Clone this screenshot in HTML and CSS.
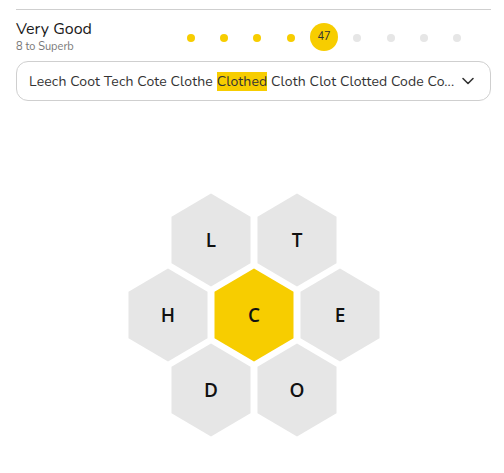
FILE: index.html
```html
<!DOCTYPE html>
<html>
<head>
<meta charset="utf-8">
<link rel="stylesheet" href="styles.css">
</head>
<body>
<div class="page">
  <div class="status">
    <div class="rank">
      <div class="rank-title">Very Good</div>
      <div class="rank-next">8 to Superb</div>
    </div>
    <div class="progress">
      <span class="dot on"></span>
      <span class="dot on"></span>
      <span class="dot on"></span>
      <span class="dot on"></span>
      <span class="score">47</span>
      <span class="dot"></span>
      <span class="dot"></span>
      <span class="dot"></span>
      <span class="dot"></span>
    </div>
  </div>
  <div class="words">
    <div class="word-list">Leech Coot Tech Cote Clothe <mark class="hl">Clothed</mark> Cloth Clot Clotted Code Co...</div>
    <svg class="chev" width="14" height="10" viewBox="0 0 14 10"><path d="M2 2.5 L7 7.5 L12 2.5" fill="none" stroke="#333" stroke-width="1.6" stroke-linecap="round" stroke-linejoin="round"/></svg>
  </div>
  <svg class="hive" width="270" height="260" viewBox="-135 -130 270 260">
    <defs>
      <polygon id="hex" points="0,-46.5 39.5,-23.25 39.5,23.25 0,46.5 -39.5,23.25 -39.5,-23.25"/>
    </defs>
    <g transform="translate(-43,-75)"><use href="#hex" class="cell"/><text class="letter" y="0" dy="0.36em">L</text></g>
    <g transform="translate(43,-75)"><use href="#hex" class="cell"/><text class="letter" y="0" dy="0.36em">T</text></g>
    <g transform="translate(-86,0)"><use href="#hex" class="cell"/><text class="letter" y="0" dy="0.36em">H</text></g>
    <g transform="translate(0,0)"><use href="#hex" class="cell center"/><text class="letter" y="0" dy="0.36em">C</text></g>
    <g transform="translate(86,0)"><use href="#hex" class="cell"/><text class="letter" y="0" dy="0.36em">E</text></g>
    <g transform="translate(-43,75)"><use href="#hex" class="cell"/><text class="letter" y="0" dy="0.36em">D</text></g>
    <g transform="translate(43,75)"><use href="#hex" class="cell"/><text class="letter" y="0" dy="0.36em">O</text></g>
  </svg>
</div>
</body>
</html>
```
FILE: styles.css
```css
html, body {
  margin: 0;
  padding: 0;
  background: #fff;
}
body {
  font-family: "Nunito", "Lato", "Open Sans", sans-serif;
  color: #222;
}
.page {
  padding: 9px 13px 0 16px;
}
.status {
  border-top: 1px solid #cfcfcf;
  display: flex;
  justify-content: space-between;
  align-items: center;
  height: 51px;
}
.rank {
  padding-top: 1px;
}
.rank-title {
  font-size: 16px;
  line-height: 18px;
  color: #1a1a1a;
}
.rank-next {
  font-size: 11px;
  line-height: 13px;
  margin-top: 2px;
  color: #777;
}
.progress {
  width: 300px;
  display: grid;
  grid-template-columns: repeat(9, 1fr);
  align-items: center;
  justify-items: center;
  margin-right: 17px;
  margin-top: 2px;
}
.dot {
  width: 8px;
  height: 8px;
  border-radius: 50%;
  background: #e6e6e6;
  margin-top: 2px;
}
.dot.on {
  background: #f7cd00;
}
.score {
  width: 28px;
  height: 28px;
  border-radius: 50%;
  background: #f7cd00;
  font-size: 11px;
  display: flex;
  align-items: center;
  justify-content: center;
  color: #333;
}
.words {
  height: 38px;
  border: 1px solid #cfcfcf;
  border-radius: 12px;
  display: flex;
  align-items: center;
  padding: 0 15px 0 12px;
  justify-content: space-between;
}
.word-list {
  font-size: 14px;
  letter-spacing: 0.13px;
  color: #333;
  white-space: nowrap;
  overflow: hidden;
}
.hl {
  background: #f7cd00;
  color: #333;
  padding: 2px 0;
}
.chev {
  display: block;
}
.hive {
  display: block;
  margin: 84px auto 0;
}
.cell {
  fill: #e6e6e6;
}
.cell.center {
  fill: #f7cd00;
}
.letter {
  font-family: "Open Sans", sans-serif;
  font-weight: 600;
  font-size: 19px;
  text-anchor: middle;
  fill: #111;
}
```
